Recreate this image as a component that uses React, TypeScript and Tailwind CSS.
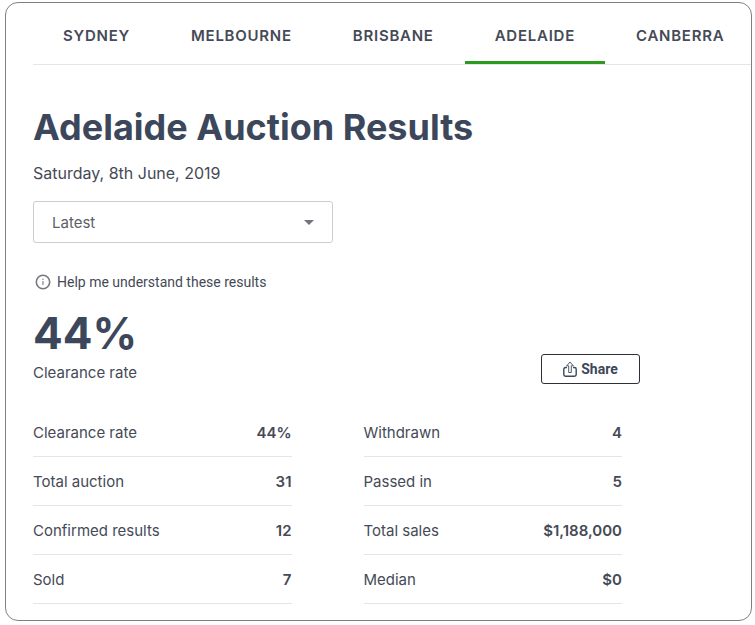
const cities = ["Sydney", "Melbourne", "Brisbane", "Adelaide", "Canberra"];

const leftStats = [
  { label: "Clearance rate", value: "44%" },
  { label: "Total auction", value: "31" },
  { label: "Confirmed results", value: "12" },
  { label: "Sold", value: "7" },
];

const rightStats = [
  { label: "Withdrawn", value: "4" },
  { label: "Passed in", value: "5" },
  { label: "Total sales", value: "$1,188,000" },
  { label: "Median", value: "$0" },
];

function CityTabs({ active }: { active: string }) {
  return (
    <nav aria-label="Cities" className="ml-[27px] overflow-hidden border-b border-[#e3e5e8]">
      <ul className="flex gap-px">
        {cities.map((city) => (
          <li key={city}>
            <a
              href={`#${city.toLowerCase()}`}
              aria-current={city === active ? "page" : undefined}
              className={`flex h-[61px] items-center border-b-[3px] px-[30px] pt-2 text-[15px] font-semibold uppercase tracking-wider ${
                city === active ? "border-[#2b9a1f]" : "border-transparent"
              }`}
            >
              {city}
            </a>
          </li>
        ))}
      </ul>
    </nav>
  );
}

function InfoIcon() {
  return (
    <svg viewBox="0 0 16 16" className="size-4" fill="none" aria-hidden="true">
      <circle cx="8" cy="8" r="6.7" stroke="#77797f" strokeWidth="1.6" />
      <path d="M8 7v4" stroke="#77797f" strokeWidth="1.1" />
      <circle cx="8" cy="5.2" r="0.7" fill="#77797f" />
    </svg>
  );
}

function ShareIcon() {
  return (
    <svg viewBox="0 0 14 16" className="h-4 w-3.5" fill="none" stroke="#3c475b" aria-hidden="true">
      <path
        d="M4 6.500H2.500A1.700 1.700 0 0 0 .8 8.200V13.500A1.700 1.700 0 0 0 2.500 15.200H11.500A1.700 1.700 0 0 0 13.200 13.500V8.200A1.700 1.700 0 0 0 11.500 6.500H10"
        strokeWidth="1.4"
      />
      <path d="M5.700 11.500V4.800H3.700L7 1L10.300 4.800H8.300V11.500Z" strokeWidth="0.9" strokeLinejoin="round" />
    </svg>
  );
}

function StatsTable({ label, rows }: { label: string; rows: { label: string; value: string }[] }) {
  return (
    <table aria-label={label} className="w-full border-separate border-spacing-0 text-[15px] leading-6">
      <tbody>
        {rows.map((row) => (
          <tr key={row.label} className="h-[49px]">
            <th scope="row" className="border-b border-[#e3e5e8] pt-px text-left font-normal">
              {row.label}
            </th>
            <td className="border-b border-[#e3e5e8] pt-px text-right font-semibold">{row.value}</td>
          </tr>
        ))}
      </tbody>
    </table>
  );
}

export default function App() {
  return (
    <div className="bg-white pt-0.5 pr-[3px] pb-1 pl-[5px] font-['Inter','Liberation_Sans',sans-serif] text-[#454a56]">
      <main className="rounded-[13px] border border-[#808080]">
        <CityTabs active="Adelaide" />

        <div className="px-[27px] pt-[38px] pb-4">
          <h1 className="text-4xl leading-12 font-bold text-[#3c475b]">Adelaide Auction Results</h1>
          <p className="mt-2.5 text-[16px] leading-6">Saturday, 8th June, 2019</p>

          <div className="relative mt-4 max-w-[300px]">
            <select
              aria-label="Auction date"
              className="block h-[42px] w-full appearance-none rounded-[3px] border border-[#cccdd0] bg-white px-[18px] pt-0.5 text-[15px] text-[#5c5f66]"
            >
              <option>Latest</option>
            </select>
            <svg
              viewBox="0 0 10 5"
              className="pointer-events-none absolute top-[19px] right-[19px] h-[5px] w-2.5"
              fill="#73757c"
              aria-hidden="true"
            >
              <path d="M0 0h10L5 5z" />
            </svg>
          </div>

          <a
            href="#help"
            className="mt-[29px] flex items-center gap-1.5 pl-0.5 font-['Roboto','Liberation_Sans',sans-serif] text-[14px] leading-5"
          >
            <InfoIcon />
            Help me understand these results
          </a>

          <div className="mt-[17px] flex max-w-[607px] items-end justify-between">
            <div>
              <p className="text-[44px] leading-12 font-bold text-[#3c475b]">44%</p>
              <p className="mt-1 text-[15px] leading-6">Clearance rate</p>
            </div>
            <button
              type="button"
              className="mb-px flex h-[30px] w-[99px] items-center justify-center gap-1 rounded-[3px] border border-[#2d3039] font-['Roboto','Liberation_Sans',sans-serif] text-[14px] font-bold text-[#3c475b]"
            >
              <ShareIcon />
              Share
            </button>
          </div>

          <div className="mt-[23px] grid max-w-[589px] grid-cols-2 gap-[72px]">
            <StatsTable label="Auction outcomes" rows={leftStats} />
            <StatsTable label="Sales summary" rows={rightStats} />
          </div>
        </div>
      </main>
    </div>
  );
}
